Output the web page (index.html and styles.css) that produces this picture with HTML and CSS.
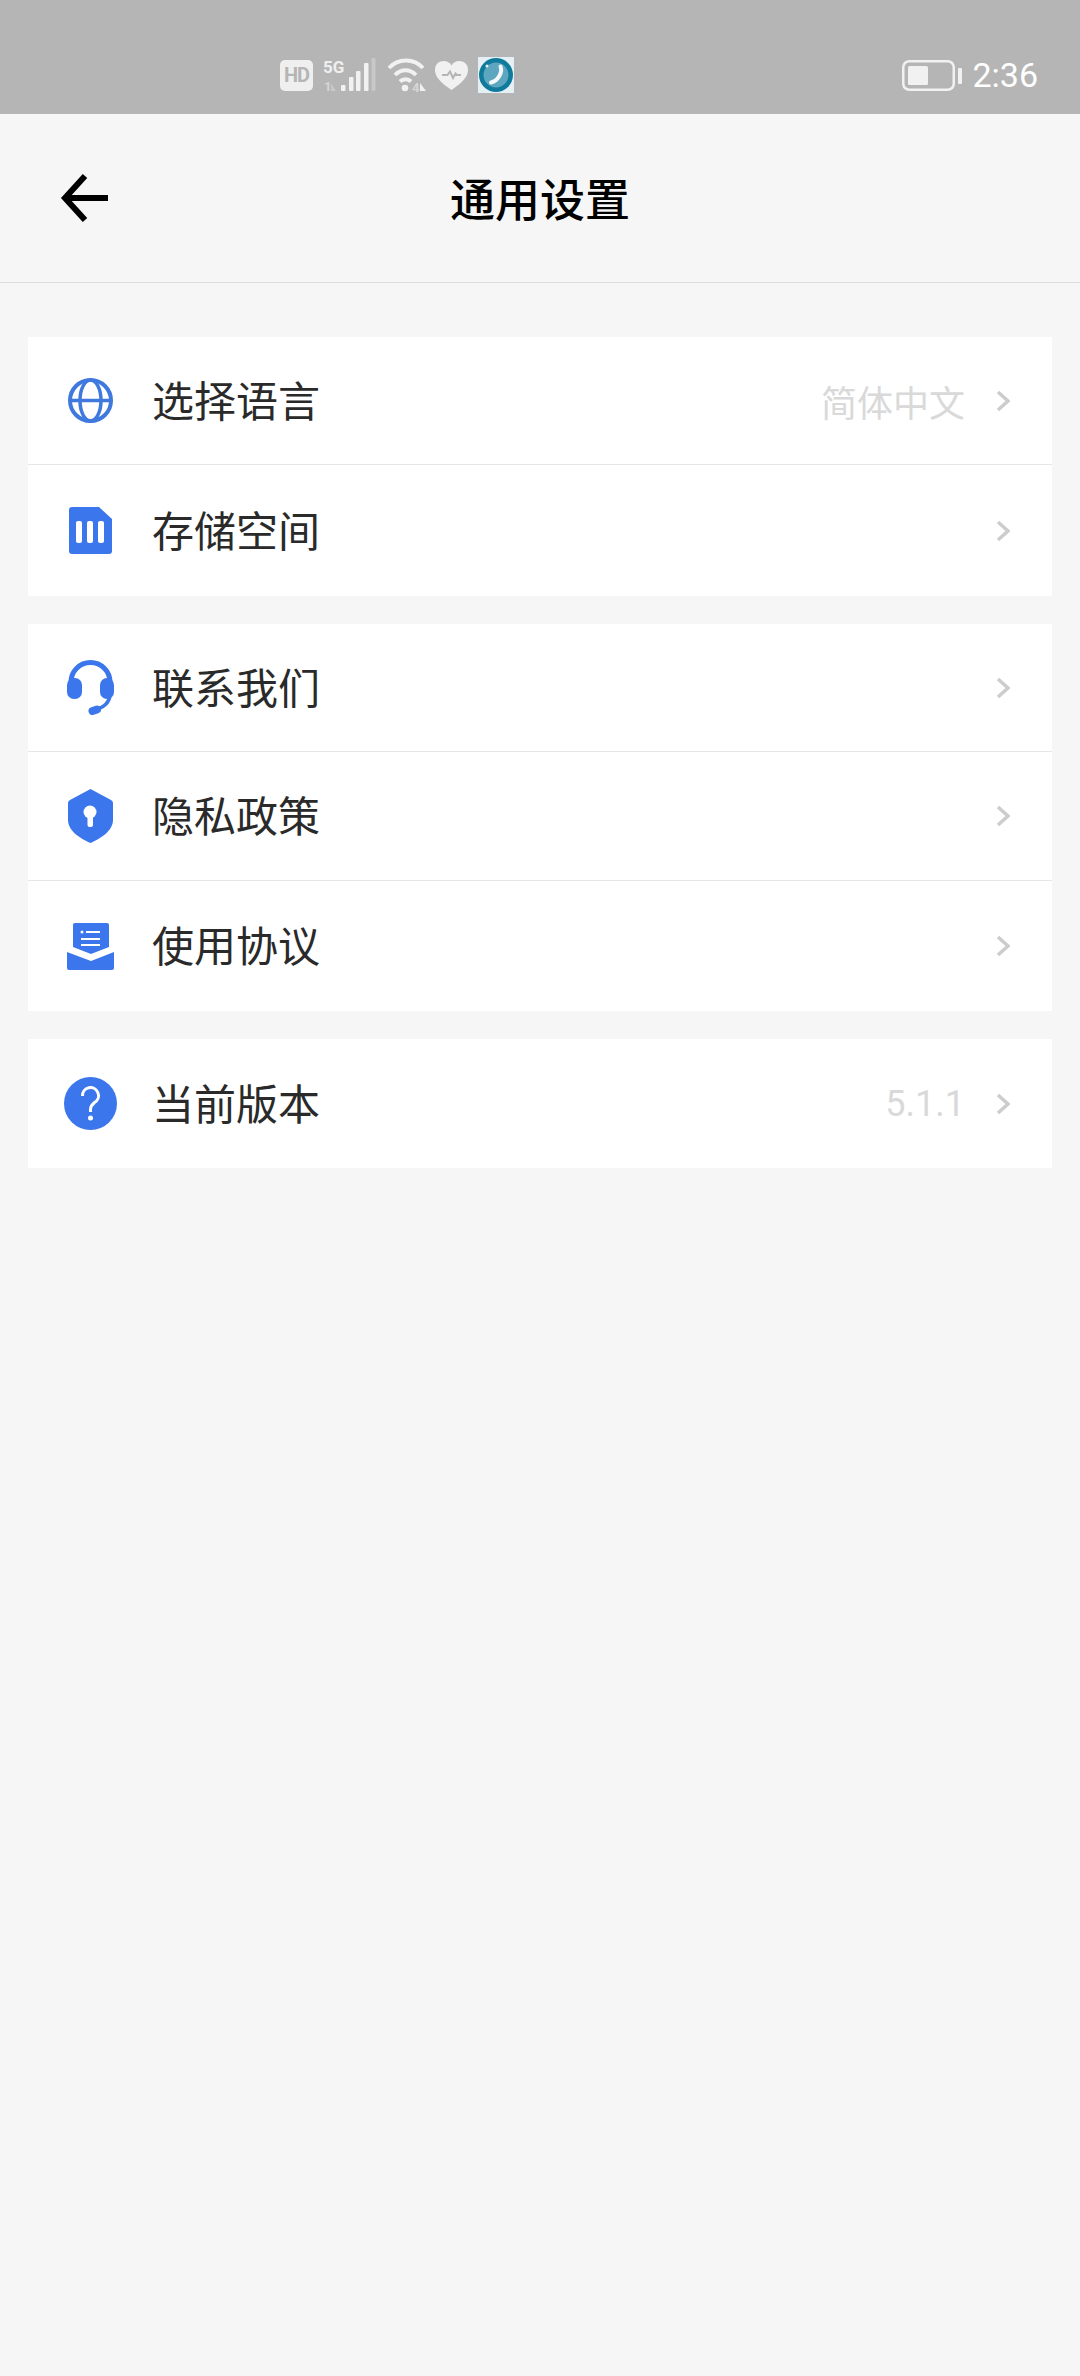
FILE: index.html
```html
<!DOCTYPE html>
<html lang="zh-CN">
<head>
    <meta charset="UTF-8">
    <meta name="viewport" content="width=device-width, initial-scale=1.0">
    <title>通用设置</title>
    <link rel="stylesheet" href="styles.css">
</head>
<body>
    <div class="status-bar">
        <div class="hd-badge">HD</div>
        <svg width="54" height="36" viewBox="0 0 54 36">
            <text class="net-label" x="0" y="15.5">5G</text>
            <text class="net-small" x="1" y="34">1</text>
            <path class="dim" d="M8 34v-8l5 8z"/>
            <rect class="bar" x="18" y="28" width="4.5" height="6" rx="1"/>
            <rect class="bar" x="26" y="20" width="4.5" height="14" rx="1"/>
            <rect class="bar" x="33" y="14" width="4.5" height="20" rx="1"/>
            <rect class="bar" x="41" y="6" width="4.5" height="28" rx="1"/>
            <rect class="dim" x="48.5" y="1" width="4" height="33" rx="1"/>
        </svg>
        <svg width="40" height="36" viewBox="0 0 40 36">
            <path class="wave" d="M2 11C11 1 27 1 36 11"/>
            <path class="wave" d="M8 18C14 11.5 23 11.5 29 18"/>
            <path class="wave" d="M13 24.5C16 21.5 21 21.5 24 24.5"/>
            <circle class="solid" cx="18" cy="31" r="3.3"/>
            <text class="net-small" x="25" y="34.5">4</text>
            <path class="solid" d="M33 26l6 8h-6z"/>
        </svg>
        <svg class="heart" width="33" height="29" viewBox="0 0 33 29">
            <path class="solid" d="M16.5 29C8 23 0 17 0 9C0 3 4 0 9 0C12 0 15 1.5 16.5 4.5C18 1.5 21 0 24 0C29 0 33 3 33 9C33 17 25 23 16.5 29Z"/>
            <path class="pulse" d="M7 14H12.5L15 10.5L18 17L20.5 12.5L22 14H26"/>
        </svg>
        <svg width="36" height="36" viewBox="0 0 36 36">
            <rect width="36" height="36" fill="#e4f0f5"/>
            <circle cx="18" cy="18" r="17" fill="#0f7a9c"/>
            <circle cx="18" cy="18" r="12.5" fill="#5da6bf"/>
            <path d="M22.5 9.5C25 15 20 24 13 25.5" fill="none" stroke="#f4f8fa" stroke-width="4" stroke-linecap="round"/>
            <circle cx="9" cy="9" r="1.5" fill="#e4f0f5"/>
        </svg>
        <div class="status-right">
            <svg width="60" height="31" viewBox="0 0 60 31">
                <rect class="batt-line" x="1.25" y="1.25" width="50.5" height="28.5" rx="6"/>
                <rect class="solid" x="6" y="6" width="20" height="19" rx="1.5"/>
                <rect class="solid" x="56" y="8" width="4" height="16" rx="1"/>
            </svg>
            <span class="clock">2:36</span>
        </div>
    </div>

    <header class="top-bar">
        <svg class="back" width="48" height="48" viewBox="0 0 48 48">
            <path d="M25 2L5 24L25 46M5 24H48" fill="none" stroke="#000" stroke-width="6"/>
        </svg>
        <h1 class="title">通用设置</h1>
    </header>

    <main class="settings">
        <section class="card">
            <div class="row row-a">
                <div class="row-icon">
                    <svg width="45" height="45" viewBox="0 0 45 45">
                        <g fill="none" stroke="#4079de">
                            <circle cx="22.5" cy="22.5" r="20.5" stroke-width="4"/>
                            <ellipse cx="22.5" cy="22.5" rx="10.5" ry="20.5" stroke-width="3.5"/>
                            <path d="M2 22.5H43" stroke-width="3.5"/>
                        </g>
                    </svg>
                </div>
                <span class="row-label">选择语言</span>
                <span class="row-value">简体中文</span>
                <svg class="chevron" width="14" height="22" viewBox="0 0 14 22"><path d="M2 2L12 11L2 20"/></svg>
            </div>
            <div class="row row-b">
                <div class="row-icon">
                    <svg width="43" height="47" viewBox="0 0 43 47">
                        <path class="blue" d="M3 0H30L43 12V44A3 3 0 0 1 40 47H3A3 3 0 0 1 0 44V3A3 3 0 0 1 3 0Z"/>
                        <rect x="7" y="14" width="6" height="22" rx="2" fill="#fff"/>
                        <rect x="18" y="14" width="6" height="22" rx="2" fill="#fff"/>
                        <rect x="29" y="14" width="6" height="22" rx="2" fill="#fff"/>
                    </svg>
                </div>
                <span class="row-label">存储空间</span>
                <svg class="chevron" width="14" height="22" viewBox="0 0 14 22"><path d="M2 2L12 11L2 20"/></svg>
            </div>
        </section>

        <section class="card">
            <div class="row row-a">
                <div class="row-icon">
                    <svg width="47" height="55" viewBox="0 0 47 55">
                        <path d="M4 24V22A19.5 19.5 0 0 1 43 22V24" fill="none" stroke="#3b76ec" stroke-width="5"/>
                        <rect class="blue" x="0" y="18" width="15" height="21" rx="7"/>
                        <rect class="blue" x="33" y="18" width="14" height="21" rx="7"/>
                        <path d="M43 36C41 45 35 48 26 50.5" fill="none" stroke="#3b76ec" stroke-width="3.5"/>
                        <path d="M25.5 51L30 49.5" fill="none" stroke="#3b76ec" stroke-width="8" stroke-linecap="round"/>
                    </svg>
                </div>
                <span class="row-label">联系我们</span>
                <svg class="chevron" width="14" height="22" viewBox="0 0 14 22"><path d="M2 2L12 11L2 20"/></svg>
            </div>
            <div class="row row-c">
                <div class="row-icon">
                    <svg width="45" height="54" viewBox="0 0 45 54">
                        <path class="blue" d="M22.5 0L43 11Q45 12 45 14V31C45 42 32 50 22.5 54C13 50 0 42 0 31V14Q0 12 2 11Z"/>
                        <circle cx="22" cy="23" r="6.5" fill="#fff"/>
                        <rect x="19.5" y="24" width="5.5" height="14" rx="2" fill="#fff"/>
                    </svg>
                </div>
                <span class="row-label">隐私政策</span>
                <svg class="chevron" width="14" height="22" viewBox="0 0 14 22"><path d="M2 2L12 11L2 20"/></svg>
            </div>
            <div class="row row-d">
                <div class="row-icon">
                    <svg width="47" height="47" viewBox="0 0 47 47">
                        <path class="blue" d="M8 0H40A2 2 0 0 1 42 2V24L24 31L6 24V2A2 2 0 0 1 8 0Z"/>
                        <path class="blue" d="M0 29L24 38L47 29V45A2 2 0 0 1 45 47H2A2 2 0 0 1 0 45Z"/>
                        <circle cx="15" cy="9" r="1.5" fill="#fff"/>
                        <path d="M19 9H33M14 16H33M14 22H33" stroke="#fff" stroke-width="2"/>
                    </svg>
                </div>
                <span class="row-label">使用协议</span>
                <svg class="chevron" width="14" height="22" viewBox="0 0 14 22"><path d="M2 2L12 11L2 20"/></svg>
            </div>
        </section>

        <section class="card">
            <div class="row row-e">
                <div class="row-icon">
                    <svg width="53" height="53" viewBox="0 0 53 53">
                        <circle class="blue" cx="26.5" cy="26.5" r="26.5"/>
                        <path d="M18.5 19A8 8 0 1 1 30.5 25.5C28 27.5 26.5 29 26.5 32.5V35" fill="none" stroke="#fff" stroke-width="3"/>
                        <circle cx="26.5" cy="41" r="2.5" fill="#fff"/>
                    </svg>
                </div>
                <span class="row-label">当前版本</span>
                <span class="row-value version">5.1.1</span>
                <svg class="chevron" width="14" height="22" viewBox="0 0 14 22"><path d="M2 2L12 11L2 20"/></svg>
            </div>
        </section>
    </main>
</body>
</html>
```

FILE: styles.css
```css
* {
    box-sizing: border-box;
}
body {
    margin: 0;
    min-height: 2376px;
    background-color: #f6f6f6;
    font-family: "Noto Sans CJK SC", "Noto Sans", sans-serif;
}

/* Status bar */
.status-bar {
    display: flex;
    align-items: center;
    gap: 10px;
    height: 114px;
    padding: 36px 42px 0 280px;
    background-color: #b5b5b5;
}
.hd-badge {
    width: 33px;
    height: 31px;
    border-radius: 5px;
    background-color: #efefef;
    color: #b5b5b5;
    font-family: Roboto, sans-serif;
    font-size: 20px;
    font-weight: 700;
    line-height: 31px;
    letter-spacing: -1px;
    text-align: center;
}
.net-label {
    fill: #efefef;
    font-family: Roboto, sans-serif;
    font-size: 17px;
    font-weight: 700;
}
.net-small {
    fill: #d6d6d6;
    font-family: Roboto, sans-serif;
    font-size: 13px;
    font-weight: 700;
}
.bar,
.solid {
    fill: #f1f1f1;
}
.dim {
    fill: #c8c8c8;
}
.wave {
    fill: none;
    stroke: #f1f1f1;
    stroke-width: 4;
}
.heart {
    margin-left: -2px;
}
.pulse {
    fill: none;
    stroke: #b5b5b5;
    stroke-width: 2;
}
.status-right {
    display: flex;
    align-items: center;
    gap: 10px;
    margin-left: auto;
}
.batt-line {
    fill: none;
    stroke: #f1f1f1;
    stroke-width: 2.5;
}
.clock {
    color: #fff;
    font-family: Roboto, sans-serif;
    font-size: 34px;
    line-height: 36px;
}

/* Title bar */
.top-bar {
    display: grid;
    grid-template-columns: 1fr auto 1fr;
    align-items: center;
    height: 169px;
    border-bottom: 1px solid #dcdcdc;
}
.back {
    margin-left: 60px;
}
.title {
    margin: 0 0 1px;
    color: #000;
    font-size: 45px;
    font-weight: 500;
}

/* Settings list */
.settings {
    display: flex;
    flex-direction: column;
    gap: 28px;
    padding: 54px 28px 0;
}
.card {
    background-color: #fff;
}
.row {
    display: flex;
    align-items: center;
    padding-right: 42px;
    border-bottom: 1px solid #e6e6e6;
}
.row:last-child {
    border-bottom: none;
}
.row-a {
    height: 128px;
}
.row-b {
    height: 131px;
}
.row-c {
    height: 129px;
}
.row-d {
    height: 130px;
}
.row-e {
    height: 129px;
}
.row-icon {
    display: flex;
    justify-content: center;
    flex: none;
    width: 124px;
}
.row-icon svg {
    display: block;
}
.blue {
    fill: #3b76ec;
}
.row-label {
    margin-bottom: 4px;
    color: #2a2a2a;
    font-size: 42px;
    line-height: 56px;
}
.row-value {
    margin-left: auto;
    margin-right: 31px;
    color: #d9d9d9;
    font-size: 36px;
    line-height: 50px;
}
.version {
    font-family: Roboto, sans-serif;
}
.chevron {
    flex: none;
}
.row-label + .chevron {
    margin-left: auto;
}
.chevron path {
    fill: none;
    stroke: #cccccc;
    stroke-width: 3.5;
}
```
